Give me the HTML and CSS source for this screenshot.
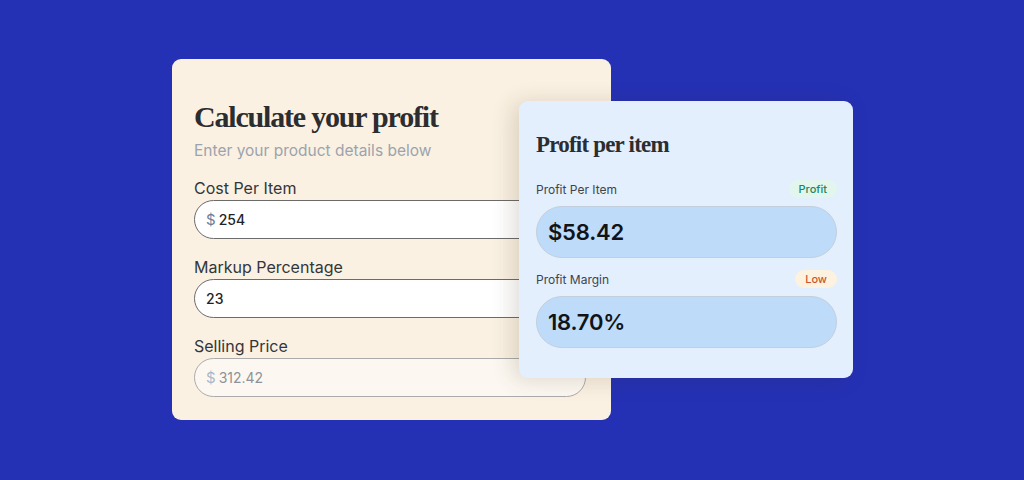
FILE: index.html
```html
<!DOCTYPE html>
<html lang="en">
<head>
<meta charset="utf-8">
<title>Profit calculator</title>
<link rel="stylesheet" href="styles.css">
</head>
<body>
<main class="stage">
  <section class="calc-card">
    <h1 class="calc-title">Calculate your profit</h1>
    <p class="calc-sub">Enter your product details below</p>
    <label class="field-label">Cost Per Item</label>
    <div class="field"><span class="cur">$</span><span class="val">254</span></div>
    <label class="field-label">Markup Percentage</label>
    <div class="field"><span class="val">23</span></div>
    <label class="field-label">Selling Price</label>
    <div class="field field-readonly"><span class="cur">$</span><span class="val">312.42</span></div>
  </section>
  <section class="result-card">
    <h2 class="result-title">Profit per item</h2>
    <div class="result-row">
      <span class="result-label">Profit Per Item</span>
      <span class="badge badge-green">Profit</span>
    </div>
    <div class="result-box">$58.42</div>
    <div class="result-row row-second">
      <span class="result-label">Profit Margin</span>
      <span class="badge badge-orange">Low</span>
    </div>
    <div class="result-box">18.70%</div>
  </section>
</main>
</body>
</html>
```
FILE: styles.css
```css
* { box-sizing: border-box; }
html, body { margin: 0; padding: 0; }
body {
  width: 1024px;
  height: 480px;
  background: #2431b5;
  overflow: hidden;
  font-family: Inter, "Noto Sans", sans-serif;
}
.stage {
  position: relative;
  padding: 59px 0 0 172px;
}
.calc-card {
  width: 439px;
  height: 361px;
  background: #faf1e2;
  border-radius: 9px;
  padding: 40px 25px 0 22px;
  display: flex;
  flex-direction: column;
}
.calc-title {
  margin: 0;
  font-family: "Liberation Serif", serif;
  font-weight: 700;
  font-size: 30px;
  line-height: 36px;
  letter-spacing: -1.2px;
  color: #2b2d31;
}
.calc-sub {
  margin: 6px 0 0;
  font-size: 15.5px;
  line-height: 20px;
  color: #9ca3ae;
}
.field-label {
  margin-top: 18px;
  font-size: 16px;
  line-height: 20px;
  color: #33363b;
}
.calc-sub + .field-label { margin-top: 17px; }
.field {
  margin-top: 2px;
  height: 39px;
  border: 1.5px solid #6b6b6b;
  border-radius: 20px;
  background: #ffffff;
  display: flex;
  align-items: center;
  padding-left: 11px;
  font-size: 14px;
  font-weight: 500;
  color: #1f2227;
}
.cur { color: #6c7d99; margin-right: 3px; font-size: 15px; font-weight: 400; }
.field-readonly {
  background: #fcf8f1;
  border-color: #ababab;
  color: #8f9298;
  font-weight: 400;
}
.field-readonly .cur { color: #a9b7cc; }
.result-card {
  position: absolute;
  left: 519px;
  top: 101px;
  width: 334px;
  height: 277px;
  background: #e3effc;
  border-radius: 9px;
  padding: 30px 16px 0 17px;
  box-shadow: -6px 2px 22px rgba(60, 45, 20, 0.16);
}
.result-title {
  margin: 0;
  font-family: "Liberation Serif", serif;
  font-weight: 700;
  font-size: 23px;
  line-height: 28px;
  letter-spacing: -0.8px;
  color: #2b2d31;
}
.result-row {
  margin-top: 21px;
  height: 18px;
  display: flex;
  justify-content: space-between;
  align-items: center;
}
.row-second { margin-top: 12px; }
.result-label {
  font-size: 12px;
  color: #3f444c;
}
.badge {
  height: 18px;
  border-radius: 9px;
  padding: 0 10px;
  font-size: 11px;
  font-weight: 500;
  line-height: 18px;
}
.badge-green { background: #e2f6ee; color: #23875a; }
.badge-orange { background: #fdf2df; color: #c9562f; }
.result-box {
  margin-top: 8px;
  height: 52px;
  border: 1px solid #c3cfdc;
  border-radius: 26px;
  background: #bedbfa;
  display: flex;
  align-items: center;
  padding-left: 11px;
  font-size: 22px;
  font-weight: 600;
  letter-spacing: -0.2px;
  color: #111317;
}
```
